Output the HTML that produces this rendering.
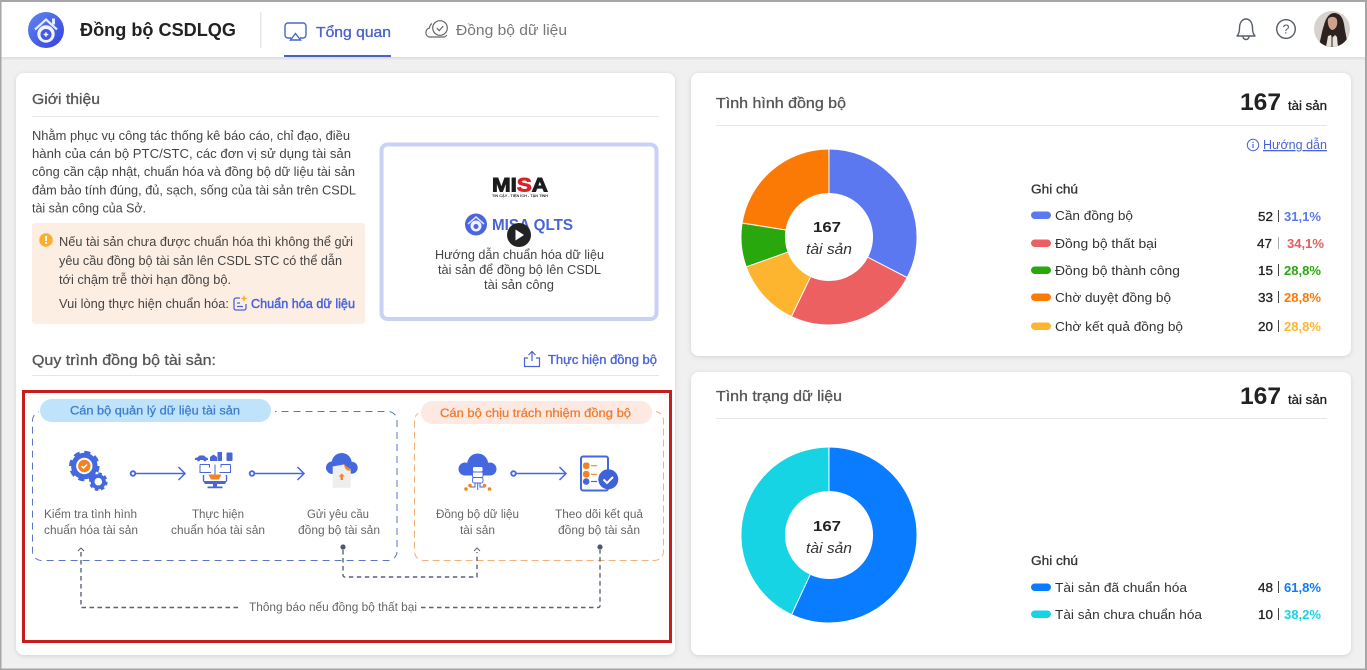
<!DOCTYPE html>
<html><head><meta charset="utf-8"><title>Đồng bộ CSDLQG</title>
<style>
html,body{margin:0;padding:0;background:#f0f0f0;width:1367px;height:670px;overflow:hidden}
svg{display:block}
text{font-family:"Liberation Sans",sans-serif;font-size:13px;fill:#444}
.m{stroke:currentColor;stroke-width:.3;paint-order:stroke}
.h{font-size:15px;color:#555;fill:#555}
.b{font-weight:bold}
.s{font-size:12.3px;fill:#666}
.l{fill:#333;font-size:13px}
.n{fill:#222;font-size:13px}
.blue{fill:#4a64d8;color:#4a64d8}
</style></head><body>
<svg width="1367" height="670" viewBox="0 0 1367 670" xmlns="http://www.w3.org/2000/svg">
<defs>
<linearGradient id="lg" x1="0" y1="0" x2="1" y2="1"><stop offset="0" stop-color="#5f86f0"/><stop offset="1" stop-color="#3540e0"/></linearGradient>
<filter id="sh" x="-5%" y="-5%" width="110%" height="110%"><feDropShadow dx="0" dy="1" stdDeviation="2.5" flood-color="#000" flood-opacity=".13"/></filter>
</defs>
<rect width="1367" height="670" fill="#f0f0f0"/>
<!-- header -->
<rect x="0" y="2" width="1367" height="55" fill="#fff" filter="url(#sh)"/>
<circle cx="46" cy="30" r="18" fill="url(#lg)"/>
<path d="M35 29.500 46 19.500l11 10" fill="none" stroke="#e6ebfe" stroke-width="2.200"/>
<rect x="52" y="18.500" width="3" height="6" fill="#e6ebfe"/>
<circle cx="46" cy="34" r="8.700" fill="#f1f3fe"/>
<circle cx="46" cy="34.500" r="5.500" fill="#4458e6"/><path d="M46 32.200v4.600M43.700 34.500h4.600" stroke="#fff" stroke-width="1.400"/>
<text x="80" y="36" textLength="156" lengthAdjust="spacingAndGlyphs" class="b" style="font-size:18.500px;fill:#222">Đồng bộ CSDLQG</text>
<rect x="260" y="12" width="1.500" height="36" fill="#e8e8e8"/>
<path d="M291 38h-3a3 3 0 0 1-3-3V26a3 3 0 0 1 3-3h15a3 3 0 0 1 3 3v9a3 3 0 0 1-3 3h-3" fill="none" stroke="#4a64c8" stroke-width="1.400"/>
<path d="M295.500 33.500 300.500 40h-10z" fill="none" stroke="#4a64c8" stroke-width="1.400"/>
<text x="316" y="37" textLength="75" lengthAdjust="spacingAndGlyphs" class="h m" style="fill:#4a62c8;color:#4a62c8">Tổng quan</text>
<rect x="284" y="55" width="107" height="2" fill="#4a62c8"/>
<path d="M432 23.500a6 6 0 0 0-2.500 4.500 4.700 4.700 0 0 0-.5 9h15.500a4.500 4.500 0 0 0 2.200-2" fill="none" stroke="#666" stroke-width="1.200"/>
<circle cx="440" cy="28" r="7.300" fill="none" stroke="#666" stroke-width="1.200"/>
<path d="M436.800 28.200l2.400 2.400 4-4.500" fill="none" stroke="#666" stroke-width="1.200"/>
<text x="456" y="35" textLength="111" lengthAdjust="spacingAndGlyphs" class="h" style="fill:#777">Đồng bộ dữ liệu</text>
<path d="M1237 36c2-2 2.500-4 2.500-8 0-5 2.500-9 6.500-9s6.500 4 6.500 9c0 4 .5 6 2.500 8z" fill="none" stroke="#555d6b" stroke-width="1.400" stroke-linejoin="round"/>
<path d="M1243 36.500a3 3 0 0 0 6 0" fill="none" stroke="#555d6b" stroke-width="1.400"/>
<circle cx="1286" cy="29" r="9.300" fill="none" stroke="#555d6b" stroke-width="1.400"/>
<text x="1286" y="33.500" text-anchor="middle" style="font-size:12.500px;fill:#555d6b">?</text>
<clipPath id="av"><circle cx="1332" cy="29" r="18"/></clipPath>
<g clip-path="url(#av)"><rect x="1314" y="11" width="36" height="36" fill="#d6d3cf"/>
<path d="M1318 47c3-7 3-13 6-22 2-8 6-12 10-12 6 0 9 5 10 11 1 8 3 15 4 23z" fill="#2e2220"/>
<path d="M1328 19c2-3 8-3 9 1 1 5-1 9-4.500 10-2.500 0-5.500-5-4.500-11z" fill="#cfa08c"/>
<path d="M1326 47l2-11 3-1 1 3 3-3 2 2 1 10z" fill="#e8e2da"/>
<path d="M1332 37v10" stroke="#2e2220"/></g>
<!-- frame -->
<rect x="0" y="0" width="1367" height="2" fill="#a6a6a6"/>
<rect x="0" y="0" width="1.500" height="670" fill="#a6a6a6"/>
<rect x="1365" y="0" width="2" height="670" fill="#a6a6a6"/>
<rect x="0" y="668.500" width="1367" height="1.500" fill="#a6a6a6"/>
<!-- cards -->
<rect x="16" y="73" width="659" height="582" rx="8" fill="#fff" filter="url(#sh)"/>
<rect x="691" y="73" width="660" height="283" rx="8" fill="#fff" filter="url(#sh)"/>
<rect x="691" y="372" width="660" height="283" rx="8" fill="#fff" filter="url(#sh)"/>
<!-- left card top -->
<text x="32" y="104" textLength="68" lengthAdjust="spacingAndGlyphs" class="h m">Giới thiệu</text>
<rect x="32" y="116" width="627" height="1" fill="#e6e6e6"/>
<text x="32" y="140" textLength="318" lengthAdjust="spacingAndGlyphs">Nhằm phục vụ công tác thống kê báo cáo, chỉ đạo, điều</text>
<text x="32" y="158" textLength="319" lengthAdjust="spacingAndGlyphs">hành của cán bộ PTC/STC, các đơn vị sử dụng tài sản</text>
<text x="32" y="176" textLength="323" lengthAdjust="spacingAndGlyphs">công cần cập nhật, chuẩn hóa và đồng bộ dữ liệu tài sản</text>
<text x="32" y="194.500" textLength="324" lengthAdjust="spacingAndGlyphs">đảm bảo tính đúng, đủ, sạch, sống của tài sản trên CSDL</text>
<text x="32" y="212.500" textLength="114" lengthAdjust="spacingAndGlyphs">tài sản công của Sở.</text>
<rect x="32" y="223" width="333" height="101" rx="3" fill="#fdeee3"/>
<circle cx="46" cy="240" r="6.800" fill="#fbb02d"/>
<rect x="45.200" y="236" width="1.800" height="5" fill="#fff"/><rect x="45.200" y="242" width="1.800" height="1.800" fill="#fff"/>
<text x="59" y="246" textLength="294" lengthAdjust="spacingAndGlyphs">Nếu tài sản chưa được chuẩn hóa thì không thể gửi</text>
<text x="59" y="265" textLength="283" lengthAdjust="spacingAndGlyphs">yêu cầu đồng bộ tài sản lên CSDL STC có thể dẫn</text>
<text x="59" y="284" textLength="172" lengthAdjust="spacingAndGlyphs">tới chậm trễ thời hạn đồng bộ.</text>
<text x="59" y="308" textLength="170" lengthAdjust="spacingAndGlyphs">Vui lòng thực hiện chuẩn hóa:</text>
<path d="M240 298h-4a2 2 0 0 0-2 2v8a2 2 0 0 0 2 2h8a2 2 0 0 0 2-2v-4" fill="none" stroke="#4a64d8" stroke-width="1.300"/>
<path d="M237 303h3M237 306.500h6" stroke="#4a64d8" stroke-width="1.200"/>
<path d="M244 295l1 2.500 2.500 1-2.500 1-1 2.500-1-2.500-2.500-1 2.500-1z" fill="#fbb02d"/>
<text x="251" y="308" textLength="104" lengthAdjust="spacingAndGlyphs" class="m blue" style="stroke-width:.45">Chuẩn hóa dữ liệu</text>
<!-- video -->
<rect x="381.500" y="144.500" width="275" height="174.500" rx="6" fill="#fff" stroke="#c9d2f5" stroke-width="4"/>
<text x="492" y="191.500" textLength="56" lengthAdjust="spacingAndGlyphs" class="b" style="font-size:19px;fill:#1c1c1c;stroke:#1c1c1c;stroke-width:.9">MI<tspan style="fill:#d8232a;stroke:#d8232a">S</tspan>A</text>
<text x="492" y="197" textLength="56" lengthAdjust="spacingAndGlyphs" class="b" style="font-size:4px;fill:#333">TIN CẬY - TIỆN ÍCH - TẬN TÌNH</text>
<circle cx="476" cy="224.500" r="11" fill="#4a66dc"/>
<path d="M468 224l8-7 8 7" fill="none" stroke="#dfe6fd" stroke-width="1.500"/>
<circle cx="476" cy="226" r="5.500" fill="#eef1fe"/><circle cx="476" cy="226.500" r="2.500" fill="#4a66dc"/>
<text x="492" y="230" textLength="81" lengthAdjust="spacingAndGlyphs" class="b blue" style="font-size:16px">MISA QLTS</text>
<circle cx="519" cy="235" r="12" fill="#232323"/>
<path d="M515.500 229.500v11l8.500-5.500z" fill="#fff"/>
<text x="435" y="259" textLength="169" lengthAdjust="spacingAndGlyphs">Hướng dẫn chuẩn hóa dữ liệu</text>
<text x="438" y="274" textLength="163" lengthAdjust="spacingAndGlyphs">tài sản để đồng bộ lên CSDL</text>
<text x="484" y="289" textLength="70" lengthAdjust="spacingAndGlyphs">tài sản công</text>
<!-- process heading -->
<text x="32" y="365" textLength="184" lengthAdjust="spacingAndGlyphs" class="h m">Quy trình đồng bộ tài sản:</text>
<rect x="32" y="375" width="627" height="1" fill="#e6e6e6"/>
<path d="M528 358h-3.500v8.500h15V358H536" fill="none" stroke="#4a64d8" stroke-width="1.200"/>
<path d="M532 361v-9M528.500 355l3.500-3.500 3.500 3.500" fill="none" stroke="#4a64d8" stroke-width="1.200"/>
<text x="548" y="364" textLength="109" lengthAdjust="spacingAndGlyphs" class="m blue" style="stroke-width:.35">Thực hiện đồng bộ</text>
<!-- process boxes -->
<rect x="32.500" y="411.500" width="364.500" height="149" rx="9" fill="none" stroke="#5b76c4" stroke-dasharray="7 5"/>
<rect x="414.500" y="411.500" width="249" height="149" rx="9" fill="none" stroke="#f0b27a" stroke-dasharray="7 4"/>
<rect x="39" y="398" width="236" height="26" fill="#fff"/>
<rect x="418" y="400" width="238" height="25" fill="#fff"/>
<rect x="40" y="399" width="231" height="23" rx="11.500" fill="#bfe3fb"/>
<text x="70" y="414.500" textLength="170" lengthAdjust="spacingAndGlyphs" class="m" style="font-size:12.300px;fill:#3f7ecf;color:#3f7ecf">Cán bộ quản lý dữ liệu tài sản</text>
<rect x="421" y="401" width="231" height="23" rx="11.500" fill="#fde8e2"/>
<text x="440" y="417" textLength="191" lengthAdjust="spacingAndGlyphs" class="m" style="font-size:12.300px;fill:#ef7d2e;color:#ef7d2e">Cán bộ chịu trách nhiệm đồng bộ</text>
<!-- arrows -->
<g fill="none" stroke="#4468e0" stroke-width="1.500">
<circle cx="133" cy="473.500" r="2.300" stroke-width="1.900"/><path d="M135.500 473.500H185M178.500 467l6.500 6.500-6.500 6.500"/>
<circle cx="252" cy="473.500" r="2.300" stroke-width="1.900"/><path d="M254.500 473.500H304M297.500 467l6.500 6.500-6.500 6.500"/>
<circle cx="513.500" cy="473.500" r="2.300" stroke-width="1.900"/><path d="M516 473.500H566M559.500 467l6.500 6.500-6.500 6.500"/>
</g>
<!-- gear icon -->
<circle cx="84.300" cy="466" r="13.400" fill="none" stroke="#4468e0" stroke-width="3.800" pathLength="64" stroke-dasharray="4.500 3.500"/>
<circle cx="84.300" cy="466" r="10.700" fill="#fff" stroke="#4468e0" stroke-width="5"/>
<circle cx="84.300" cy="466" r="6.200" fill="#f58220"/>
<path d="M81.500 466l2 2 3.500-3.500" fill="none" stroke="#fff" stroke-width="1.500"/>
<circle cx="98.300" cy="481.700" r="8" fill="none" stroke="#4468e0" stroke-width="2.600" pathLength="48" stroke-dasharray="3.400 2.600"/>
<circle cx="98.300" cy="481.700" r="5.700" fill="#fff" stroke="#4468e0" stroke-width="3.800"/>
<!-- monitor icon -->
<g fill="#4a66d8">
<path d="M195 459c0-1.500 1.500-1.500 2.500-1.500l2-2h4.500l2 2c1.500 0 2 .5 2 1.500v1H195z"/>
<circle cx="198.500" cy="460" r="1.400"/><circle cx="205" cy="460" r="1.400"/>
<path d="M210 461v-4l3.500-2.500 3.500 2.500v4z"/><rect x="217.500" y="452" width="4.500" height="9"/>
<rect x="226.500" y="452.500" width="6" height="8.500" rx="1"/>
</g>
<g fill="none" stroke="#4a66d8" stroke-width="1">
<path d="M200 464.500v8h11M230.500 464.500v8h-11M200 464.500h9.500v3M230.500 464.500h-9.500v3M215 464.500v10"/>
<path d="M203.500 475v6M226.500 475v6" stroke-width="1.400"/>
</g>
<path d="M208.500 474.500h13l-2.500 5h-8z" fill="#f58220"/>
<path d="M203 481h24l-2 3h-20z" fill="#4a66d8"/>
<path d="M213 484h4v2.500h5.500v1.800h-15v-1.800h5.500z" fill="#4a66d8"/>
<!-- cloud icon -->
<g fill="#4468e0"><circle cx="341.700" cy="463" r="10"/><circle cx="332.300" cy="467.700" r="6.300"/><circle cx="351.700" cy="467.700" r="6"/></g>
<path d="M332.700 466.500l11-2 7 5v18.200h-18z" fill="#eeeeee"/>
<path d="M344 464l7 6.500c-3 1-6.500-1-7-6.500z" fill="#f58220"/>
<path d="M341.700 473.500l3 3h-1.800v3.500h-2.400V476.500h-1.800z" fill="#f58220"/>
<!-- cloud db -->
<g fill="#4468e0"><circle cx="477.700" cy="464" r="10.500"/><circle cx="465" cy="469" r="6.500"/><circle cx="490" cy="469" r="6.500"/><rect x="465" y="468" width="25" height="7.500"/></g>
<g fill="#fff" stroke="#4468e0" stroke-width=".9"><rect x="472.500" y="466.500" width="10.500" height="5.500" rx="2"/><rect x="472.500" y="472" width="10.500" height="5.500" rx="1"/><rect x="472.500" y="477.500" width="10.500" height="5.500" rx="2"/></g>
<path d="M475 483v4h-5M480 483v4h5M477.700 483v7" fill="none" stroke="#4a66d8"/>
<g fill="#f58220"><circle cx="466" cy="489" r="1.800"/><circle cx="470" cy="485.500" r="1.800"/><circle cx="484.500" cy="485.500" r="1.800"/><circle cx="489.500" cy="489" r="1.800"/></g>
<!-- checklist -->
<rect x="581" y="456.500" width="27" height="34" rx="2" fill="#fff" stroke="#4468e0" stroke-width="2"/>
<rect x="583" y="462.500" width="6.500" height="6.500" rx="2.500" fill="#f58220"/><rect x="583" y="471" width="6.500" height="6.500" rx="2.500" fill="#f58220"/><circle cx="586.200" cy="481.500" r="3.300" fill="#4468e0"/>
<path d="M591 465.700h6M591 474.300h6" stroke="#f58220" stroke-width="1.200"/>
<path d="M591 481.500h6" stroke="#4468e0" stroke-width="1.200"/>
<circle cx="608.300" cy="479.300" r="10" fill="#3f62d8"/>
<path d="M603.500 479.500l3.500 3.500 6-6" fill="none" stroke="#fff" stroke-width="2"/>
<!-- step labels -->
<g class="steps">
<text class="s" x="44" y="518" textLength="93" lengthAdjust="spacingAndGlyphs">Kiểm tra tình hình</text>
<text class="s" x="44" y="534" textLength="94" lengthAdjust="spacingAndGlyphs">chuẩn hóa tài sản</text>
<text class="s" x="192" y="518" textLength="52" lengthAdjust="spacingAndGlyphs">Thực hiện</text>
<text class="s" x="171" y="534" textLength="94" lengthAdjust="spacingAndGlyphs">chuẩn hóa tài sản</text>
<text class="s" x="307" y="518" textLength="62" lengthAdjust="spacingAndGlyphs">Gửi yêu cầu</text>
<text class="s" x="298" y="534" textLength="82" lengthAdjust="spacingAndGlyphs">đồng bộ tài sản</text>
<text class="s" x="436" y="518" textLength="83" lengthAdjust="spacingAndGlyphs">Đồng bộ dữ liệu</text>
<text class="s" x="460" y="534" textLength="35" lengthAdjust="spacingAndGlyphs">tài sản</text>
<text class="s" x="555" y="518" textLength="88" lengthAdjust="spacingAndGlyphs">Theo dõi kết quả</text>
<text class="s" x="558" y="534" textLength="82" lengthAdjust="spacingAndGlyphs">đồng bộ tài sản</text>
</g>
<!-- connectors -->
<g fill="none" stroke="#5a6375" stroke-width="1.400">
<path d="M81 552V607.500H241" stroke-dasharray="4.500 3.500"/>
<path d="M78 551l3-3 3 3" stroke-width="1"/>
<path d="M421 607.500H598q2 0 2-2V550" stroke-dasharray="4.500 3.500"/>
<path d="M343 550V575q0 2 2 2H477V552" stroke-dasharray="4.500 3.500"/>
<path d="M474 551l3-3 3 3" stroke-width="1"/>
</g>
<circle cx="343" cy="547" r="2.600" fill="#50586a"/><circle cx="600" cy="547" r="2.600" fill="#50586a"/>
<text class="s" x="249" y="611" textLength="168" lengthAdjust="spacingAndGlyphs">Thông báo nếu đồng bộ thất bại</text>
<!-- red highlight -->
<rect x="23.500" y="391.500" width="647" height="250" fill="none" stroke="#c41e1e" stroke-width="3"/>
<!-- right top -->
<text x="716" y="108" textLength="130" lengthAdjust="spacingAndGlyphs" class="h m">Tình hình đồng bộ</text>
<text x="1240" y="110" textLength="41" lengthAdjust="spacingAndGlyphs" class="b" style="font-size:24px;fill:#222">167</text>
<text x="1288" y="110" textLength="39" lengthAdjust="spacingAndGlyphs" class="n m" style="color:#222">tài sản</text>
<rect x="716" y="125" width="611" height="1" fill="#e6e6e6"/>
<circle cx="1253" cy="145" r="5.700" fill="none" stroke="#4a64d8"/>
<rect x="1252.400" y="144" width="1.200" height="4" fill="#4a64d8"/><rect x="1252.400" y="141.800" width="1.200" height="1.200" fill="#4a64d8"/>
<text x="1263" y="149" textLength="64" lengthAdjust="spacingAndGlyphs" class="blue" text-decoration="underline">Hướng dẫn</text>
<!-- donut 1 -->
<g transform="rotate(-90 829 237)" fill="none" stroke-width="43.500">
<circle cx="829" cy="237" r="65.800" pathLength="360" stroke="#5b78f0" stroke-dasharray="117.500 360"/>
<circle cx="829" cy="237" r="65.800" pathLength="360" stroke="#ec6061" stroke-dasharray="87.900 360" stroke-dashoffset="-117.500"/>
<circle cx="829" cy="237" r="65.800" pathLength="360" stroke="#fdb52f" stroke-dasharray="44.600 360" stroke-dashoffset="-205.400"/>
<circle cx="829" cy="237" r="65.800" pathLength="360" stroke="#28a80c" stroke-dasharray="29 360" stroke-dashoffset="-250"/>
<circle cx="829" cy="237" r="65.800" pathLength="360" stroke="#fb7a06" stroke-dasharray="81 360" stroke-dashoffset="-279"/>
</g>
<g stroke="#fff" stroke-width="1">
<path d="M829 193V149M868 257.300 907 277.500M810.500 277 791 317.500M788 252 746 267M786 230 742.500 223"/>
</g>
<text x="813" y="232" textLength="28" lengthAdjust="spacingAndGlyphs" class="b" style="font-size:15px;fill:#222">167</text>
<text x="806" y="254" textLength="46" lengthAdjust="spacingAndGlyphs" style="font-size:14.500px;font-style:italic;fill:#333">tài sản</text>
<text x="1031" y="193.500" textLength="47" lengthAdjust="spacingAndGlyphs" class="l m" style="color:#333">Ghi chú</text>
<g>
<rect x="1031" y="211.500" width="20" height="7.500" rx="3.700" fill="#5b78f0"/>
<rect x="1031" y="239.500" width="20" height="7.500" rx="3.700" fill="#ec6061"/>
<rect x="1031" y="266.500" width="20" height="7.500" rx="3.700" fill="#28a80c"/>
<rect x="1031" y="293.500" width="20" height="7.500" rx="3.700" fill="#fb7a06"/>
<rect x="1031" y="322.500" width="20" height="7.500" rx="3.700" fill="#fdb52f"/>
</g>
<text class="l" x="1055" y="220" textLength="78" lengthAdjust="spacingAndGlyphs">Cần đồng bộ</text>
<text class="l" x="1055" y="248" textLength="102" lengthAdjust="spacingAndGlyphs">Đồng bộ thất bại</text>
<text class="l" x="1055" y="275" textLength="125" lengthAdjust="spacingAndGlyphs">Đồng bộ thành công</text>
<text class="l" x="1055" y="302" textLength="116" lengthAdjust="spacingAndGlyphs">Chờ duyệt đồng bộ</text>
<text class="l" x="1055" y="331" textLength="128" lengthAdjust="spacingAndGlyphs">Chờ kết quả đồng bộ</text>
<text class="n m" x="1258" y="221" textLength="15" lengthAdjust="spacingAndGlyphs" style="color:#222">52</text><rect x="1278" y="210" width="1" height="12" fill="#444"/>
<text class="b" x="1284" y="221" textLength="37" lengthAdjust="spacingAndGlyphs" style="fill:#5b78f0">31,1%</text>
<text class="n m" x="1257" y="248" textLength="15" lengthAdjust="spacingAndGlyphs" style="color:#222">47</text><rect x="1278" y="237" width="1" height="12" fill="#aaa"/>
<text class="b" x="1287" y="248" textLength="37" lengthAdjust="spacingAndGlyphs" style="fill:#e35d5e">34,1%</text>
<text class="n m" x="1258" y="275" textLength="15" lengthAdjust="spacingAndGlyphs" style="color:#222">15</text><rect x="1278" y="264" width="1" height="12" fill="#444"/>
<text class="b" x="1284" y="275" textLength="37" lengthAdjust="spacingAndGlyphs" style="fill:#28a80c">28,8%</text>
<text class="n m" x="1258" y="302" textLength="15" lengthAdjust="spacingAndGlyphs" style="color:#222">33</text><rect x="1278" y="291" width="1" height="12" fill="#444"/>
<text class="b" x="1284" y="302" textLength="37" lengthAdjust="spacingAndGlyphs" style="fill:#fb7a06">28,8%</text>
<text class="n m" x="1258" y="331" textLength="15" lengthAdjust="spacingAndGlyphs" style="color:#222">20</text><rect x="1278" y="320" width="1" height="12" fill="#444"/>
<text class="b" x="1284" y="331" textLength="37" lengthAdjust="spacingAndGlyphs" style="fill:#fdb52f">28,8%</text>
<!-- right bottom -->
<text x="716" y="401" textLength="126" lengthAdjust="spacingAndGlyphs" class="h m">Tình trạng dữ liệu</text>
<text x="1240" y="404" textLength="41" lengthAdjust="spacingAndGlyphs" class="b" style="font-size:24px;fill:#222">167</text>
<text x="1288" y="404" textLength="39" lengthAdjust="spacingAndGlyphs" class="n m" style="color:#222">tài sản</text>
<rect x="716" y="418" width="611" height="1" fill="#e6e6e6"/>
<g transform="rotate(-90 829 535)" fill="none" stroke-width="43.500">
<circle cx="829" cy="535" r="65.800" pathLength="360" stroke="#0a7cff" stroke-dasharray="205.600 360"/>
<circle cx="829" cy="535" r="65.800" pathLength="360" stroke="#17d4e4" stroke-dasharray="154.400 360" stroke-dashoffset="-205.600"/>
</g>
<path d="M829 491V447M810 575 791 616" stroke="#fff" stroke-width="1"/>
<text x="813" y="531" textLength="28" lengthAdjust="spacingAndGlyphs" class="b" style="font-size:15px;fill:#222">167</text>
<text x="806" y="553" textLength="46" lengthAdjust="spacingAndGlyphs" style="font-size:14.500px;font-style:italic;fill:#333">tài sản</text>
<text x="1031" y="565" textLength="47" lengthAdjust="spacingAndGlyphs" class="l m" style="color:#333">Ghi chú</text>
<rect x="1031" y="583.500" width="20" height="7.500" rx="3.700" fill="#0a7cff"/>
<rect x="1031" y="610.500" width="20" height="7.500" rx="3.700" fill="#17d4e4"/>
<text class="l" x="1055" y="592" textLength="132" lengthAdjust="spacingAndGlyphs">Tài sản đã chuẩn hóa</text>
<text class="l" x="1055" y="619" textLength="147" lengthAdjust="spacingAndGlyphs">Tài sản chưa chuẩn hóa</text>
<text class="n m" x="1258" y="592" textLength="15" lengthAdjust="spacingAndGlyphs" style="color:#222">48</text><rect x="1278" y="581" width="1" height="12" fill="#444"/>
<text class="b" x="1284" y="592" textLength="37" lengthAdjust="spacingAndGlyphs" style="fill:#0a7cff">61,8%</text>
<text class="n m" x="1258" y="619" textLength="15" lengthAdjust="spacingAndGlyphs" style="color:#222">10</text><rect x="1278" y="608" width="1" height="12" fill="#444"/>
<text class="b" x="1284" y="619" textLength="37" lengthAdjust="spacingAndGlyphs" style="fill:#17d4e4">38,2%</text>
</svg>
</body></html>
